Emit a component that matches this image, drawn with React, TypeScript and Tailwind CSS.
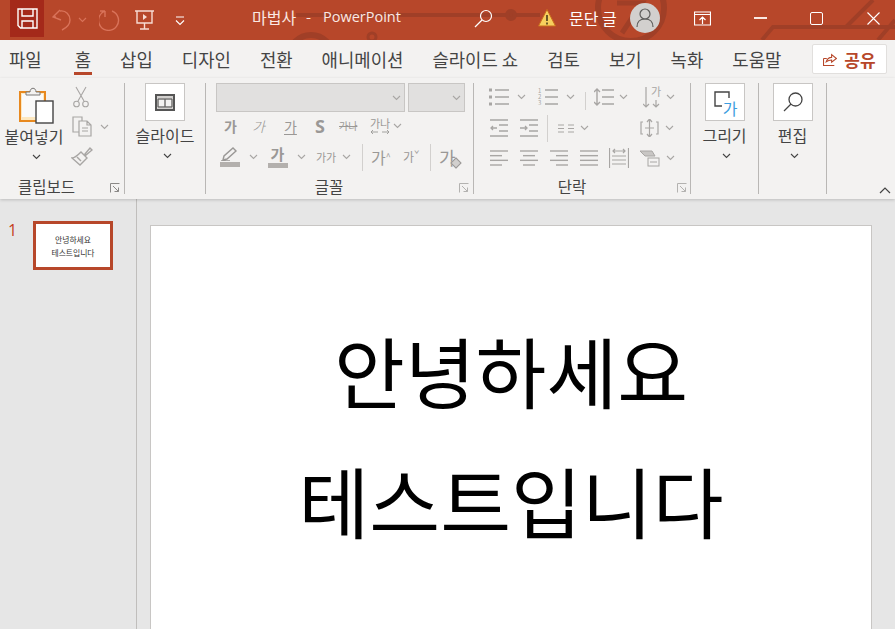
import type { ReactNode } from "react";

const fontStack = { fontFamily: '"Noto Sans CJK KR", "Noto Sans", sans-serif' };

function Chevron({ className = "" }: { className?: string }) {
  return (
    <svg width="9" height="6" viewBox="0 0 9 6" className={`shrink-0 ${className}`} fill="none" stroke="currentColor" strokeWidth="1.1">
      <path d="M1 1l3.5 3.5L8 1" />
    </svg>
  );
}

function GrayChevron({ w = "w-[16px]" }: { w?: string }) {
  return (
    <span className={`flex ${w} shrink-0 justify-center text-[#a8a6a4]`}>
      <Chevron />
    </span>
  );
}

function Launcher({ className = "" }: { className?: string }) {
  return (
    <svg width="10" height="10" viewBox="0 0 10 10" className={className} fill="none" stroke="#8a8886">
      <path d="M.5 9.5v-9h9M3 3l5.5 5.5M8.5 4.5v4h-4" />
    </svg>
  );
}

function Lines({ kind = "full" }: { kind?: "full" | "left" | "center" | "right" }) {
  const short = (i: number) => kind !== "full" && i % 2 === 1;
  return (
    <svg width="18" height="18" viewBox="0 0 18 18" stroke="#a8a6a4" strokeWidth="1.4">
      {[0, 1, 2, 3].map((i) => {
        const y = 2 + (i * 14) / 3;
        const x1 = short(i) && kind === "right" ? 6 : short(i) && kind === "center" ? 3 : 0;
        const x2 = short(i) && kind === "left" ? 12 : short(i) && kind === "center" ? 15 : 18;
        return <line key={i} x1={x1} x2={x2} y1={y} y2={y} />;
      })}
    </svg>
  );
}

function Group({ w, label, children, labelClass = "" }: { w: string; label?: string; children: ReactNode; labelClass?: string }) {
  return (
    <div className={`relative flex h-[111px] shrink-0 flex-col border-r border-[#b9b7b5] ${w}`}>
      <div className="flex-1">{children}</div>
      {label && <div className={`h-[21px] text-center text-[15.5px] leading-[27px] text-[#444] ${labelClass}`}>{label}</div>}
    </div>
  );
}

function LargeAction({ icon, label }: { icon: ReactNode; label: string }) {
  return (
    <div className="flex flex-col items-center">
      <div className="flex h-[38px] w-[40px] items-center justify-center border border-[#c8c6c4] bg-white">{icon}</div>
      <div className="mt-[3px] whitespace-nowrap text-[16px] leading-[22px] text-[#444]">{label}</div>
      <Chevron className="ml-[4px] mt-[7px] text-[#444]" />
    </div>
  );
}

function TitleBar() {
  return (
    <div className="relative flex h-10 items-start overflow-hidden bg-[#b7472a] text-white">
      <svg className="absolute inset-0" width="895" height="40" fill="none" stroke="#a03f27" strokeWidth="4">
        <path d="M296 15h215M500 15h40" />
        <circle cx="311" cy="57" r="22" strokeWidth="6" />
        <circle cx="372" cy="37" r="4" strokeWidth="3" />
        <circle cx="511" cy="15" r="4" />
        <circle cx="631" cy="8" r="33" strokeWidth="6" />
        <path d="M617 3h25l-20 30" strokeWidth="5" />
        <path d="M762 40l11-13h122M846 27l27-27M878 40l17-20" />
      </svg>
      <div className="relative ml-[10px] flex h-[37px] w-[34px] items-center justify-center bg-[#a4291a]">
        <svg width="21" height="21" viewBox="0 0 21 21" fill="none" stroke="#fff" strokeWidth="1.4">
          <path d="M1 1h19v19H3.5L1 17.500zM5 1v7h11V1M5 20v-7h11v7" />
        </svg>
      </div>
      <div className="relative ml-[8px] mt-[9px] flex items-center">
        <svg width="20" height="22" viewBox="0 0 20 22" fill="none" stroke="#d9735a" strokeWidth="1.4">
          <path d="M8 1L1 8l8 3M1 8h3M8 2c6-1 10 4 10 9 0 5-4 8-8 10" />
        </svg>
        <Chevron className="ml-[6px] text-[#d9735a]" />
        <svg className="ml-[12px]" width="22" height="22" viewBox="0 0 22 22" fill="none" stroke="#d9735a" strokeWidth="1.4">
          <path d="M6 2a10 10 0 1 0 7 0M6 2v6M6 2H1" />
        </svg>
        <svg className="ml-[14px]" width="20" height="20" viewBox="0 0 20 20" fill="none" stroke="#f7dcd3" strokeWidth="1.4">
          <path d="M0 1h19M2 1v12h15V1M9.500 13v6M5 19h9" />
          <path d="M8 4l4 3-4 3z" fill="#f7dcd3" stroke="none" />
        </svg>
        <svg className="ml-[20px] mt-[2px]" width="10" height="10" viewBox="0 0 10 10" fill="none" stroke="#fff" strokeWidth="1.1">
          <path d="M1 1h8M1 4.500l4 4 4-4" />
        </svg>
      </div>
      <div className="relative ml-[67px] mt-[7px] flex w-[149px] shrink-0 whitespace-nowrap leading-[20px] text-[#fae8e3]">
        <span className="w-[44px] text-[16px]">마법사</span>
        <span className="w-[27px] pl-[10px] text-[14.500px]">-</span>
        <span className="text-[14.500px]" style={{ fontFamily: '"Open Sans", sans-serif' }}>PowerPoint</span>
      </div>
      <svg className="relative ml-[73px] mt-[9px]" width="19" height="19" viewBox="0 0 19 19" fill="none" stroke="#fff" strokeWidth="1.2">
        <circle cx="12" cy="7" r="5.500" />
        <path d="M8 11l-7 7" />
      </svg>
      <svg className="relative ml-[45px] mt-[9px]" width="18" height="18" viewBox="0 0 18 18">
        <path d="M9 .5L17.500 17H.5z" fill="#f7cf5d" stroke="#c96d1c" />
        <path d="M9 6v6M9 13.500v2" stroke="#4a3a1a" strokeWidth="1.600" />
      </svg>
      <span className="relative ml-[13px] mt-[8px] w-[48px] shrink-0 whitespace-nowrap text-[16px] leading-[20px] text-white">문단 글</span>
      <div className="relative ml-[13px] mt-[3px] flex h-[30px] w-[30px] items-center justify-center rounded-full bg-[#d2d0ce]">
        <svg width="20" height="20" viewBox="0 0 20 20" fill="none" stroke="#5f5e5c" strokeWidth="1.2">
          <circle cx="10" cy="6" r="5" />
          <path d="M2 19c0-5 3-8 8-8s8 3 8 8" />
        </svg>
      </div>
      <svg className="relative ml-[34px] mt-[11px]" width="17" height="15" viewBox="0 0 17 15" fill="none" stroke="#fff" strokeWidth="1.200">
        <path d="M.5 1h16v13H.5zM.5 3.500h16M8.500 13V6M5.500 9l3-3 3 3" />
      </svg>
      <div className="relative ml-[43px] mt-[17px] h-[1.500px] w-[13px] bg-[#fae8e3]" />
      <div className="relative ml-[43px] mt-[12px] h-[13px] w-[13px] rounded-[2px] border border-white" />
      <svg className="relative ml-[44px] mt-[12px]" width="13" height="13" viewBox="0 0 13 13" stroke="#fff" strokeWidth="1.100">
        <path d="M.5.5l12 12M12.500.5l-12 12" />
      </svg>
    </div>
  );
}

function TabRow() {
  const tabs = ["파일", "홈", "삽입", "디자인", "전환", "애니메이션", "슬라이드 쇼", "검토", "보기", "녹화", "도움말"];
  return (
    <div className="flex h-[38px] items-start bg-[#f3f2f1] pl-[9px] text-[#444]">
      <div className="flex gap-[29px]">
        {tabs.map((tab) => (
          <div key={tab} className={`relative h-[35px] whitespace-nowrap pt-[8px] text-[17.800px] leading-[22px] ${tab === "파일" ? "pr-[4px]" : ""}`}>
            {tab}
            {tab === "홈" && <div className="absolute bottom-0 left-[-1px] right-[-1px] h-[3px] bg-[#b7472a]" />}
          </div>
        ))}
      </div>
      <div className="ml-auto mr-[8px] mt-[4px] flex h-[30px] w-[75px] items-center justify-center gap-[7px] rounded-[2px] border border-[#e1dfdd] bg-white text-[#b7472a]">
        <svg width="14" height="14" viewBox="0 0 13 13" fill="none" stroke="#b7472a" strokeWidth="1">
          <path d="M.5 6v6.500h10M.5 6h3M3 9c1-3 3-4 5-4V2.500l4.500 3.500L8 9.500V7.500c-2 0-3.500.5-5 1.500z" />
        </svg>
        <span className="text-[17px] font-bold leading-none">공유</span>
      </div>
    </div>
  );
}

function Clipboard() {
  return (
    <Group w="w-[125px]" label="클립보드" labelClass="pr-[31px]">
      <div className="flex">
        <div className="flex w-[68px] flex-col items-center pt-[3px]">
          <svg className="ml-[6px]" width="36" height="38" viewBox="0 0 36 38" fill="none">
            <rect x="1" y="6" width="25" height="29" fill="#fde8c0" stroke="#e8891f" strokeWidth="2" />
            <rect x="3" y="8" width="21" height="23" fill="#fafafa" />
            <path d="M7 9V6h4c0-5 6-5 6 0h4v3z" fill="#f3f2f1" stroke="#7a7876" />
            <rect x="17" y="15" width="17" height="22" fill="#fff" stroke="#444" strokeWidth="1.400" />
          </svg>
          <div className="mt-[1px] whitespace-nowrap text-[16px] leading-[22px] text-[#444]">붙여넣기</div>
          <Chevron className="ml-[4px] mt-[7px] text-[#444]" />
        </div>
        <div className="ml-[3px] flex flex-col pt-[3px]">
          <svg className="ml-[2px]" width="16" height="22" viewBox="0 0 16 22" fill="none" stroke="#a8a6a4" strokeWidth="1.100">
            <path d="M3 1l8 14M13 1L5 15" />
            <circle cx="3.500" cy="18" r="2.800" />
            <circle cx="12.500" cy="18" r="2.800" />
          </svg>
          <div className="mt-[8px] flex items-center">
            <svg className="ml-[1px]" width="21" height="21" viewBox="0 0 21 21" fill="#f3f2f1" stroke="#a8a6a4" strokeWidth="1.200">
              <path d="M1 1h9v15H1z" />
              <path d="M7 5h8l4 4v11H7zM15 5v4h4M10 12h6M10 15h6" />
            </svg>
            <GrayChevron w="w-[22px]" />
          </div>
          <svg className="mt-[9px]" width="22" height="20" viewBox="0 0 22 20" fill="none" stroke="#a8a6a4" strokeWidth="1.400">
            <path d="M14 8l5-6 2 2-6 5zM10 6l6 6-7 7-8-7c3 0 6-3 9-6z" />
            <path d="M6 11l4 4" />
          </svg>
        </div>
      </div>
      <Launcher className="absolute bottom-[1px] right-[4px]" />
    </Group>
  );
}

function FontGroup() {
  return (
    <Group w="w-[268px]" label="글꼴" labelClass="pr-[21px]">
      <div className="pl-[10px] text-[#9a9896]">
        <div className="flex gap-[3px]">
          <div className="flex h-[29px] w-[189px] items-center justify-end border border-[#c8c6c4] bg-[#e1e0df] pr-[3px]"><Chevron className="text-[#a8a6a4]" /></div>
          <div className="flex h-[29px] w-[57px] items-center justify-end border border-[#c8c6c4] bg-[#e1e0df] pr-[3px]"><Chevron className="text-[#a8a6a4]" /></div>
        </div>
        <div className="mt-[1px] flex h-[26px] items-center text-[14px] leading-none">
          <span className="w-[29px] pl-[8px] font-bold">가</span>
          <span className="w-[29px] pl-[7px] font-light italic">가</span>
          <span className="w-[31px] pl-[10px] underline underline-offset-2">가</span>
          <span className="w-[25px] pl-[10px] text-[18px] font-bold" style={{ fontFamily: '"Open Sans", sans-serif' }}>S</span>
          <span className="w-[30px] whitespace-nowrap pl-[9px] text-[10px] line-through">가나</span>
          <div className="ml-[5px] flex w-[30px] flex-col items-center">
            <span className="text-[11px] leading-[12px]">가나</span>
            <svg width="20" height="6" viewBox="0 0 20 6" fill="none" stroke="#9a9896" strokeWidth="0.9">
              <path d="M1 3h7M3 1L1 3l2 2M12 3h7M17 1l2 2-2 2" />
            </svg>
          </div>
          <GrayChevron w="w-[10px] -ml-[3px]" />
        </div>
        <div className="mt-[4px] flex h-[28px] items-center">
          <div className="flex w-[26px] flex-col items-start pl-[4px]">
            <svg width="20" height="14" viewBox="0 0 20 14" fill="none" stroke="#9a9896" strokeWidth="1.400">
              <path d="M3 13l1-4 9-8 3 3-9 8zM1 14h9" />
            </svg>
            <div className="mt-[1px] h-[5px] w-[20px] bg-[#b3b0ad]" />
          </div>
          <GrayChevron w="w-[22px]" />
          <div className="flex w-[27px] flex-col items-center">
            <span className="text-[15px] font-bold leading-[15px]">가</span>
            <div className="mt-[2px] h-[5px] w-[20px] bg-[#b3b0ad]" />
          </div>
          <GrayChevron w="w-[21px]" />
          <span className="w-[26px] whitespace-nowrap pl-[4px] text-[11px]">가가</span>
          <GrayChevron w="w-[17px]" />
          <div className="ml-[7px] h-[27px] w-px bg-[#d2d0ce]" />
          <span className="ml-[8px] w-[32px] whitespace-nowrap text-[16px] leading-none">가<sup className="text-[9px]">^</sup></span>
          <span className="w-[27px] whitespace-nowrap text-[12px] leading-none">가<sup className="text-[9px]">ˇ</sup></span>
          <div className="h-[27px] w-px bg-[#d2d0ce]" />
          <span className="relative ml-[8px] text-[18px] leading-none">
            가
            <span className="absolute -bottom-[1px] -right-[4px] h-[8px] w-[8px] rotate-45 border border-[#9a9896] bg-[#d2d0ce]" />
          </span>
        </div>
      </div>
      <Launcher className="absolute bottom-[1px] right-[4px] opacity-60" />
    </Group>
  );
}

function ParagraphGroup() {
  return (
    <Group w="w-[217px]" label="단락" labelClass="pr-[20px]">
      <div className="pl-[15px]">
        <div className="flex h-[27px] items-center">
          <svg width="20" height="18" viewBox="0 0 20 18" stroke="#a8a6a4" strokeWidth="1.400">
            <path d="M6 2h14M6 9h14M6 16h14" />
            <path d="M0 2h3M0 9h3M0 16h3" strokeWidth="3" />
          </svg>
          <GrayChevron w="w-[24px]" />
          <span className="ml-[5px] w-[6px] whitespace-pre-line text-[6px] leading-[6px] text-[#a8a6a4]">{"1\n2\n3"}</span>
          <svg className="ml-[1px]" width="13" height="18" viewBox="0 0 13 18" stroke="#a8a6a4" strokeWidth="1.400">
            <path d="M0 2h13M0 9h13M0 16h13" />
          </svg>
          <GrayChevron w="w-[24px]" />
          <div className="ml-[3px] h-[18px] w-px self-end bg-[#d2d0ce]" />
          <svg className="ml-[8px]" width="20" height="18" viewBox="0 0 20 18" fill="none" stroke="#a8a6a4" strokeWidth="1.400">
            <path d="M3 1v16M0 4l3-3 3 3M0 14l3 3 3-3M8 2h12M8 9h12M8 16h12" />
          </svg>
          <GrayChevron w="w-[18px]" />
          <span className="relative ml-[11px] flex h-[24px] w-[18px] text-[11px] leading-none text-[#a8a6a4]">
            <svg width="18" height="24" viewBox="0 0 18 24" fill="none" stroke="#a8a6a4" strokeWidth="1.200">
              <path d="M3 2v20M0 19l3 3 3-3M13 15v7M10 19l3 3 3-3" />
            </svg>
            <span className="absolute right-0 top-[1px]">가</span>
          </span>
          <GrayChevron w="w-[18px]" />
        </div>
        <div className="flex h-[36px] items-center">
          <svg className="ml-[1px]" width="18" height="18" viewBox="0 0 18 18" fill="none" stroke="#a8a6a4" strokeWidth="1.300">
            <path d="M0 1h18M9 6h9M9 12h9M0 17h18M1 9h6M3 7L1 9l2 2" />
          </svg>
          <svg className="ml-[12px]" width="18" height="18" viewBox="0 0 18 18" fill="none" stroke="#a8a6a4" strokeWidth="1.300">
            <path d="M0 1h18M9 6h9M9 12h9M0 17h18M0 9h6M5 7l2 2-2 2" />
          </svg>
          <div className="ml-[9px] h-[27px] w-px bg-[#d2d0ce]" />
          <svg className="ml-[10px]" width="16" height="9" viewBox="0 0 16 9" stroke="#a8a6a4" strokeWidth="1.200">
            <path d="M0 1h6M0 4.500h6M0 8h6M10 1h6M10 4.500h6M10 8h6" />
          </svg>
          <GrayChevron w="w-[20px]" />
          <svg className="ml-[46px]" width="19" height="18" viewBox="0 0 19 18" fill="none" stroke="#a8a6a4" strokeWidth="1.200">
            <path d="M3 3H1v12h2M16 3h2v12h-2M9.500 0v18M7 3l2.500-3L12 3M7 15l2.500 3 2.500-3M5 9h9" />
          </svg>
          <GrayChevron w="w-[20px]" />
        </div>
        <div className="flex h-[23px] items-center">
          <span className="ml-[1px]"><Lines kind="left" /></span>
          <span className="ml-[12px]"><Lines kind="center" /></span>
          <span className="ml-[12px]"><Lines kind="right" /></span>
          <span className="ml-[12px]"><Lines /></span>
          <svg className="ml-[11px]" width="20" height="20" viewBox="0 0 20 20" fill="none" stroke="#a8a6a4" strokeWidth="1.200">
            <path d="M.5 0v20M19.500 0v20M4 3h12M6 1L4 3l2 2M14 1l2 2-2 2M3 8h14M3 12h14M3 16h14" />
          </svg>
          <svg className="ml-[11px]" width="20" height="18" viewBox="0 0 20 18" stroke="#a8a6a4" strokeWidth="1">
            <path d="M0 2h12l3 5H5z" fill="#c8c6c4" />
            <rect x="8" y="9" width="11" height="8" fill="#f3f2f1" />
            <path d="M10 13h7" />
          </svg>
          <GrayChevron w="w-[20px]" />
        </div>
      </div>
      <Launcher className="absolute bottom-[1px] right-[3px] opacity-60" />
    </Group>
  );
}

export default function App() {
  return (
    <div className="flex h-[629px] w-[895px] flex-col overflow-hidden bg-[#e6e6e6]" style={fontStack}>
      <TitleBar />
      <TabRow />
      <div className="relative flex h-[121px] shrink-0 items-start bg-[#f3f2f1] pt-[5px] shadow-[0_1px_3px_rgba(0,0,0,0.18)]">
        <Clipboard />
        <Group w="w-[81px]">
          <LargeAction
            label="슬라이드"
            icon={
              <svg width="20" height="17" viewBox="0 0 20 17">
                <rect width="20" height="17" fill="#555" />
                <rect x="2" y="2" width="16" height="13" fill="#d2d0ce" />
                <path d="M3 5h14M10 5v8M3 13h14M3 5v8M17 5v8" fill="none" stroke="#555" />
                <rect x="4" y="6" width="5" height="6" fill="#f3f2f1" />
                <rect x="11" y="6" width="5" height="6" fill="#f3f2f1" />
              </svg>
            }
          />
        </Group>
        <FontGroup />
        <ParagraphGroup />
        <Group w="w-[68px]">
          <LargeAction
            label="그리기"
            icon={
              <span className="relative block h-[22px] w-[22px]">
                <svg width="22" height="22" viewBox="0 0 22 22" fill="none" stroke="#444" strokeWidth="1.400">
                  <path d="M8 15H1V1h14v6" />
                </svg>
                <span className="absolute bottom-[-3px] right-[-2px] text-[16px] leading-none text-[#3b9de0]">가</span>
              </span>
            }
          />
        </Group>
        <Group w="w-[68px]">
          <LargeAction
            label="편집"
            icon={
              <svg width="20" height="20" viewBox="0 0 20 20" fill="none" stroke="#444" strokeWidth="1.300">
                <circle cx="12.500" cy="7.500" r="6.500" />
                <path d="M8 12l-7 7" />
              </svg>
            }
          />
        </Group>
        <svg className="absolute bottom-[5px] right-[4px]" width="12" height="7" viewBox="0 0 12 7" fill="none" stroke="#444" strokeWidth="1.200">
          <path d="M1 6l5-5 5 5" />
        </svg>
      </div>
      <div className="flex flex-1 overflow-hidden">
        <div className="flex w-[137px] shrink-0 items-start border-r border-[#c0bebc] pt-[22px]">
          <span className="ml-[8px] mt-[-2px] w-[25px] text-[16px] leading-[22px] text-[#c43e1c]" style={{ fontFamily: '"Open Sans", sans-serif' }}>1</span>
          <div className="flex h-[49px] w-[80px] flex-col items-center justify-center border-[3px] border-[#b7472a] bg-white pt-[1px] text-[7.800px] leading-[13px] text-[#333]">
            <span>안녕하세요</span>
            <span>테스트입니다</span>
          </div>
        </div>
        <div className="ml-[13px] mt-[26px] flex h-[500px] w-[722px] shrink-0 flex-col items-center border border-[#c8c6c4] bg-white pt-[79px] text-[77px] leading-[130px] text-black">
          <span>안녕하세요</span>
          <span>테스트입니다</span>
        </div>
      </div>
    </div>
  );
}
